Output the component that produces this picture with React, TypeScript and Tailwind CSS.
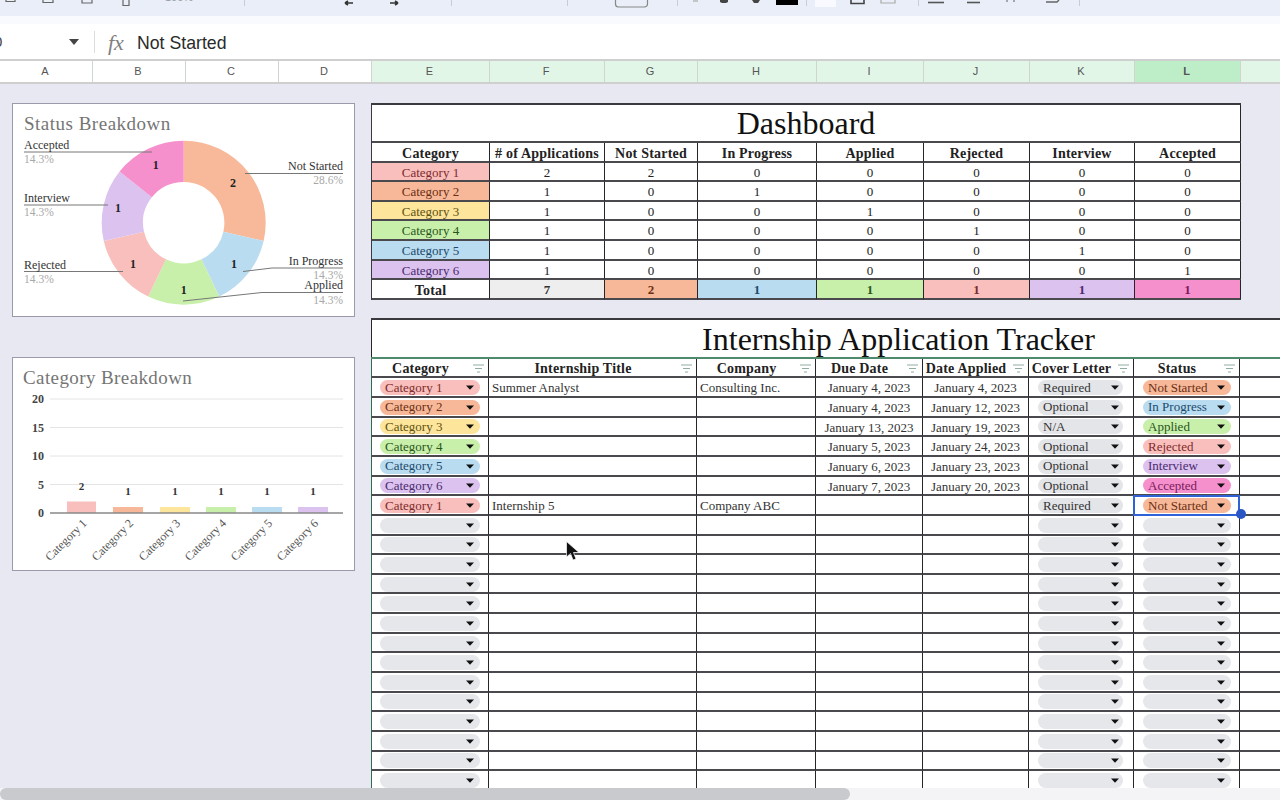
import React from 'react'

const serif = { fontFamily: '"Liberation Serif", serif' }

const COLS_DASH = 'grid-cols-[118px_115px_93px_119px_107px_106px_105px_106px]'

const CATS = [
  { bg: 'bg-[#f8bfbd]', text: 'text-[#7f2b2b]' },
  { bg: 'bg-[#f7b899]', text: 'text-[#6b2f12]' },
  { bg: 'bg-[#fde59b]', text: 'text-[#5f5210]' },
  { bg: 'bg-[#c9f0ab]', text: 'text-[#28561a]' },
  { bg: 'bg-[#b9dcf1]', text: 'text-[#1b4a6b]' },
  { bg: 'bg-[#dcc2ee]', text: 'text-[#4a2a70]' },
]

const STATUS: Record<string, { bg: string; text: string }> = {
  'Not Started': { bg: 'bg-[#f7b899]', text: 'text-[#6b2f12]' },
  'In Progress': { bg: 'bg-[#b9dcf1]', text: 'text-[#1b4a6b]' },
  Applied: { bg: 'bg-[#c9f0ab]', text: 'text-[#28561a]' },
  Rejected: { bg: 'bg-[#f8bfbd]', text: 'text-[#7f2b2b]' },
  Interview: { bg: 'bg-[#dcc2ee]', text: 'text-[#4a2a70]' },
  Accepted: { bg: 'bg-[#f590cc]', text: 'text-[#7a1b5c]' },
}

const COLUMNS = ['A', 'B', 'C', 'D', 'E', 'F', 'G', 'H', 'I', 'J', 'K', 'L', '']
const COLUMN_WIDTHS = [93, 93, 93, 93, 118, 115, 93, 119, 107, 106, 105, 106, 40]

const DASH_ROWS = [
  [2, 2, 0, 0, 0, 0, 0],
  [1, 0, 1, 0, 0, 0, 0],
  [1, 0, 0, 1, 0, 0, 0],
  [1, 0, 0, 0, 1, 0, 0],
  [1, 0, 0, 0, 0, 1, 0],
  [1, 0, 0, 0, 0, 0, 1],
]

const TRACKER = [
  { cat: 0, title: 'Summer Analyst', company: 'Consulting Inc.', due: 'January 4, 2023', applied: 'January 4, 2023', cover: 'Required', status: 'Not Started' },
  { cat: 1, title: '', company: '', due: 'January 4, 2023', applied: 'January 12, 2023', cover: 'Optional', status: 'In Progress' },
  { cat: 2, title: '', company: '', due: 'January 13, 2023', applied: 'January 19, 2023', cover: 'N/A', status: 'Applied' },
  { cat: 3, title: '', company: '', due: 'January 5, 2023', applied: 'January 24, 2023', cover: 'Optional', status: 'Rejected' },
  { cat: 4, title: '', company: '', due: 'January 6, 2023', applied: 'January 23, 2023', cover: 'Optional', status: 'Interview' },
  { cat: 5, title: '', company: '', due: 'January 7, 2023', applied: 'January 20, 2023', cover: 'Optional', status: 'Accepted' },
  { cat: 0, title: 'Internship 5', company: 'Company ABC', due: '', applied: '', cover: 'Required', status: 'Not Started' },
]

// horizontal rules read heavier than the vertical ones in the sheet
const cellBase = 'border-r border-r-[#26262a] border-b-2 border-b-[#4a4a4e] flex items-center justify-center min-w-0'
const cell = `${cellBase} pt-[2px]`
const pillCell = `${cellBase} pt-[1px]`
const rowEnd = 'border-b-2 border-b-[#4a4a4e]'

function Caret() {
  return (
    <svg width="8" height="5" viewBox="0 0 8 5" className="shrink-0">
      <path d="M0 0.5h8L4 4.8z" fill="#111" />
    </svg>
  )
}

function FilterIcon() {
  return (
    <svg width="11" height="9" viewBox="0 0 11 9" className="shrink-0 mr-[4px]">
      <path d="M0 1h11M2 4.5h7M4 8h3" stroke="#8fae9f" strokeWidth="1.2" />
    </svg>
  )
}

function Pill({ label, bg, text, arrowGap }: { label?: string; bg: string; text: string; arrowGap: string }) {
  return (
    <div className={`flex h-[15px] w-full items-center justify-between rounded-full pl-[5px] ${arrowGap} ${bg}`}>
      <span className={`-mt-[1px] text-[13px] leading-none whitespace-nowrap ${text}`}>{label}</span>
      <Caret />
    </div>
  )
}

function ToolbarStubs() {
  // only the bottom few pixels of the toolbar icons peek out above the fold
  return (
    <div className="h-[16px] shrink-0 bg-[#e9eef8]">
      <svg width="1280" height="16" viewBox="0 0 1280 16" className="block">
        <g fill="none" stroke="#666" strokeWidth="1.2">
          <path d="M6 0v1.5h9V0" />
          <path d="M43 0v2.5h10V0" />
          <path d="M82 0v3h10V0" />
          <path d="M123 0v5.5h6V0" />
          <path d="M345 3h8M345 3l3-2M345 3l3 2" stroke="#333" strokeWidth="1.6" />
          <path d="M398 3h-8M398 3l-3-2M398 3l-3 2" stroke="#333" strokeWidth="1.6" />
          <rect x="615.5" y="-6" width="32" height="13" rx="3" stroke="#888" />
          <path d="M693 1h5" stroke="#aaa" />
          <path d="M851 0v3.5h13V0" stroke="#444" strokeWidth="1.6" />
          <path d="M881 0v3h14V0" stroke="#aaa" />
          <path d="M928 2.5h16" stroke="#555" strokeWidth="1.6" />
          <path d="M967 2.5h13" stroke="#555" strokeWidth="1.6" />
          <path d="M1007 0v2M1014 0v2" stroke="#777" />
          <path d="M1046 2h11l2-2" stroke="#666" strokeWidth="1.4" />
        </g>
        <g fill="#c8ccd4">
          <rect x="244" y="0" width="1" height="6" />
          <rect x="451" y="0" width="1" height="6" />
          <rect x="567" y="0" width="1" height="6" />
          <rect x="677" y="0" width="1" height="6" />
          <rect x="806" y="0" width="1" height="6" />
          <rect x="918" y="0" width="1" height="6" />
          <rect x="1079" y="0" width="1" height="6" />
        </g>
        <path d="M720 0h8v2l-2 1h-4l-2-1z" fill="#444" />
        <path d="M752 0h8l-2 3h-4z" fill="#444" />
        <rect x="776" y="0" width="22" height="5" fill="#000" />
        <rect x="815" y="0" width="21" height="7" fill="#f8faff" />
        <text x="165" y="1" fontSize="11" fill="#9a9ea6" fontFamily="Liberation Sans">100%</text>
      </svg>
    </div>
  )
}

function FormulaBar() {
  return (
    <div className="h-[45px] shrink-0 bg-white flex flex-col">
      <div className="h-[11px] bg-[#f8fafd]" />
      <div className="flex-1 flex items-center border-b-2 border-[#cfcfcf] font-['Liberation_Sans']">
        <span className="w-[70px] text-[15px] -ml-[6px] mt-[2px] text-[#444]">0</span>
        <svg width="10" height="6" viewBox="0 0 10 6" className="ml-[5px]">
          <path d="M0 0h10L5 6z" fill="#444" />
        </svg>
        <div className="ml-[15px] w-px h-[22px] bg-[#dcdcdc]" />
        <span className="ml-[13px] mt-[2px] w-[29px] text-[22px] italic text-[#808080] font-['Liberation_Serif']">fx</span>
        <span className="mt-[4px] text-[17.7px] text-[#2a2a2a]">Not Started</span>
      </div>
    </div>
  )
}

function ColumnHeaders() {
  return (
    <div className="h-[23px] shrink-0 flex border-b-2 border-[#cfcfcf] bg-white font-['Liberation_Sans']">
      {COLUMNS.map((c, i) => (
        <div
          key={i}
          style={{ width: COLUMN_WIDTHS[i] }}
          className={`shrink-0 flex items-center justify-center pr-[2px] text-[11px] text-[#555] border-r border-[#cfd6d0] ${
            c === 'L' ? 'bg-[#bdeec8] text-[#1f4d2b] font-bold' : i >= 4 ? 'bg-[#e2f6e8]' : 'bg-white'
          }`}
        >
          {c}
        </div>
      ))}
    </div>
  )
}

const SLICES = [
  { color: '#f8b99b', value: 2 },
  { color: '#b9dcf1', value: 1 },
  { color: '#c9f0ab', value: 1 },
  { color: '#f8bfbd', value: 1 },
  { color: '#dcc2ee', value: 1 },
  { color: '#f590cc', value: 1 },
]

function donutPath(start: number, end: number, cx: number, cy: number, r: number, ri: number) {
  const p = (a: number, rad: number) => `${cx + rad * Math.sin(a)} ${cy - rad * Math.cos(a)}`
  const large = end - start > Math.PI ? 1 : 0
  return `M${p(start, r)}A${r} ${r} 0 ${large} 1 ${p(end, r)}L${p(end, ri)}A${ri} ${ri} 0 ${large} 0 ${p(start, ri)}Z`
}

function StatusChart() {
  let acc = 0
  const labels = [
    { t: 'Accepted', p: '14.3%', x: 24, y: 149, py: 163, anchor: 'start', line: 'M24 152H152' },
    { t: 'Interview', p: '14.3%', x: 24, y: 202, py: 216, anchor: 'start', line: 'M24 205H108' },
    { t: 'Rejected', p: '14.3%', x: 24, y: 269, py: 283, anchor: 'start', line: 'M24 271.5H123' },
    { t: 'Not Started', p: '28.6%', x: 343, y: 170, py: 184, anchor: 'end', line: 'M343 173.5H245' },
    { t: 'In Progress', p: '14.3%', x: 343, y: 265, py: 279, anchor: 'end', line: 'M343 268H272L243 271.5' },
    { t: 'Applied', p: '14.3%', x: 343, y: 289, py: 304, anchor: 'end', line: 'M343 292.5H262L183 301' },
  ]
  const nums = [
    ['2', 233, 187],
    ['1', 234, 268],
    ['1', 183.7, 294],
    ['1', 133, 268],
    ['1', 118, 212],
    ['1', 155.7, 169],
  ] as const
  return (
    <svg width="341" height="212" viewBox="13 104 341 212" className="block" style={serif}>
      <text x="24" y="130" fontSize="19" letterSpacing="0.5" fill="#757575">Status Breakdown</text>
      {SLICES.map((s) => {
        const start = (acc / 7) * Math.PI * 2
        acc += s.value
        const end = (acc / 7) * Math.PI * 2
        return <path key={s.color} d={donutPath(start, end, 183.7, 222.7, 82, 40.7)} fill={s.color} />
      })}
      {labels.map((l) => (
        <g key={l.t}>
          <path d={l.line} stroke="#777" strokeWidth="1" fill="none" />
          <text x={l.x} y={l.y} fontSize="12" fill="#333" textAnchor={l.anchor as 'start' | 'end'}>{l.t}</text>
          <text x={l.x} y={l.py} fontSize="11.5" fill="#a8a8a8" textAnchor={l.anchor as 'start' | 'end'}>{l.p}</text>
        </g>
      ))}
      {nums.map(([t, x, y]) => (
        <text key={`${x}`} x={x} y={y} fontSize="12" fontWeight="bold" fill="#222" textAnchor="middle">{t}</text>
      ))}
    </svg>
  )
}

function CategoryChart() {
  const bars = [
    { x: 67, w: 29, h: 11.5, c: '#f8bfbd', n: '2' },
    { x: 113, w: 30, h: 6, c: '#f7b899', n: '1' },
    { x: 160, w: 30, h: 6, c: '#fde59b', n: '1' },
    { x: 206, w: 30, h: 6, c: '#c9f0ab', n: '1' },
    { x: 252, w: 30, h: 6, c: '#b9dcf1', n: '1' },
    { x: 298, w: 30, h: 6, c: '#dcc2ee', n: '1' },
  ]
  const ticks = [
    { t: '20', y: 399 },
    { t: '15', y: 427.5 },
    { t: '10', y: 456 },
    { t: '5', y: 484.5 },
  ]
  return (
    <svg width="341" height="212" viewBox="13 358 341 212" className="block" style={serif}>
      <text x="23" y="384" fontSize="19" letterSpacing="0.4" fill="#757575">Category Breakdown</text>
      {ticks.map((t) => (
        <g key={t.t}>
          <path d={`M50 ${t.y}H343`} stroke="#e4e4e4" strokeWidth="1" />
          <text x="44" y={t.y + 4} fontSize="12" fontWeight="bold" fill="#444" textAnchor="end">{t.t}</text>
        </g>
      ))}
      <text x="44" y="517" fontSize="12" fontWeight="bold" fill="#444" textAnchor="end">0</text>
      {bars.map((b, i) => (
        <g key={i}>
          <rect x={b.x} y={513 - b.h} width={b.w} height={b.h} fill={b.c} />
          <text x={b.x + b.w / 2} y={513 - b.h - 12} fontSize="11" fontWeight="bold" fill="#333" textAnchor="middle">{b.n}</text>
          <text
            x={0}
            y={0}
            transform={`translate(${b.x + b.w / 2 + 6} 524) rotate(-45)`}
            fontSize="12"
            fill="#555"
            textAnchor="end"
          >
            {`Category ${i + 1}`}
          </text>
        </g>
      ))}
      <path d="M50 513H343" stroke="#888" strokeWidth="1.6" />
    </svg>
  )
}

function Dashboard() {
  const heads = ['Category', '# of Applications', 'Not Started', 'In Progress', 'Applied', 'Rejected', 'Interview', 'Accepted']
  const totals = [
    { v: 7, bg: 'bg-[#eeeeee]', text: 'text-[#333]' },
    { v: 2, bg: 'bg-[#f7b899]', text: 'text-[#6b2f12]' },
    { v: 1, bg: 'bg-[#b9dcf1]', text: 'text-[#1b4a6b]' },
    { v: 1, bg: 'bg-[#c9f0ab]', text: 'text-[#28561a]' },
    { v: 1, bg: 'bg-[#f8bfbd]', text: 'text-[#7f2b2b]' },
    { v: 1, bg: 'bg-[#dcc2ee]', text: 'text-[#4a2a70]' },
    { v: 1, bg: 'bg-[#f590cc]', text: 'text-[#7a1b5c]' },
  ]
  return (
    <div className="w-[870px] bg-white border-t-2 border-l border-[#3a3a3e] text-[#222]">
      <div className="h-[38px] flex items-center justify-center border-b-2 border-b-[#4a4a4e] border-r border-r-[#26262a] text-[32px] text-[#111]">
        Dashboard
      </div>
      <div className={`grid ${COLS_DASH} auto-rows-[19.6px] text-[13px]`}>
        {heads.map((h) => (
          <div key={h} className={`${cellBase} pt-[3px] font-bold text-[14px] tracking-[0.2px] whitespace-nowrap`}>{h}</div>
        ))}
        {DASH_ROWS.map((row, i) => (
          <React.Fragment key={i}>
            <div className={`${cell} ${CATS[i].bg} ${CATS[i].text}`}>Category {i + 1}</div>
            {row.map((v, j) => (
              <div key={j} className={cell}>{v}</div>
            ))}
          </React.Fragment>
        ))}
        <div className={`${cellBase} pt-[3px] font-bold text-[14px] tracking-[0.2px]`}>Total</div>
        {totals.map((t, i) => (
          <div key={i} className={`${cell} ${t.bg} ${t.text} font-bold`}>{t.v}</div>
        ))}
      </div>
    </div>
  )
}

function Tracker() {
  const heads = ['Category', 'Internship Title', 'Company', 'Due Date', 'Date Applied', 'Cover Letter', 'Status']
  const gridCols = 'grid-cols-[118px_208px_119px_107px_106px_105px_106px_1fr]'
  const blank = Array.from({ length: 14 })
  return (
    <div className="mt-[18px] w-[909px] bg-white border-t-2 border-[#3a3a3e] text-[#222] overflow-hidden">
      <div className="h-[37px] pt-[1px] w-[1054px] flex items-center justify-center border-l border-[#26262a] text-[32px] text-[#111] whitespace-nowrap">
        Internship Application Tracker
      </div>
      <div className={`grid ${gridCols} auto-rows-[19.65px] text-[13px] border-t-2 border-[#4f8a6c]`}>
        {heads.map((h) => (
          <div key={h} className={`${cell} font-bold text-[14px] tracking-[0.2px] whitespace-nowrap first:border-l first:border-l-[#2f6b4d]`}>
            <span className="flex-1 pr-[4px] text-center">{h}</span>
            <FilterIcon />
          </div>
        ))}
        <div className={rowEnd} />
        {TRACKER.map((r, i) => (
          <React.Fragment key={i}>
            <div className={`${pillCell} border-l border-l-[#2f6b4d] pl-[8px] pr-[8px]`}>
              <Pill label={`Category ${r.cat + 1}`} bg={CATS[r.cat].bg} text={CATS[r.cat].text} arrowGap="pr-[6px]" />
            </div>
            <div className={`${cell} justify-start pl-[3px] text-[#333]`}>{r.title}</div>
            <div className={`${cell} justify-start pl-[3px] text-[#333]`}>{r.company}</div>
            <div className={`${cell} text-[#333] whitespace-nowrap`}>{r.due}</div>
            <div className={`${cell} text-[#333] whitespace-nowrap`}>{r.applied}</div>
            <div className={`${pillCell} pl-[9px] pr-[10px]`}>
              <Pill label={r.cover} bg="bg-[#e4e5e8]" text="text-[#333]" arrowGap="pr-[4px]" />
            </div>
            <div className={`${pillCell} relative pl-[9px] pr-[8px]`}>
              <Pill label={r.status} bg={STATUS[r.status].bg} text={STATUS[r.status].text} arrowGap="pr-[6px]" />
              {i === 6 && (
                <div className="absolute -left-px -top-px -right-px -bottom-[2px] border-2 border-[#2f62d6]" />
              )}
            </div>
            <div className={rowEnd} />
          </React.Fragment>
        ))}
        {blank.map((_, i) => (
          <React.Fragment key={i}>
            <div className={`${pillCell} border-l border-l-[#2f6b4d] pl-[8px] pr-[8px]`}>
              <Pill bg="bg-[#e6e7ea]" text="text-[#333]" arrowGap="pr-[6px]" />
            </div>
            <div className={cell} />
            <div className={cell} />
            <div className={cell} />
            <div className={cell} />
            <div className={`${pillCell} pl-[9px] pr-[10px]`}>
              <Pill bg="bg-[#e6e7ea]" text="text-[#333]" arrowGap="pr-[4px]" />
            </div>
            <div className={`${pillCell} pl-[9px] pr-[8px]`}>
              <Pill bg="bg-[#e6e7ea]" text="text-[#333]" arrowGap="pr-[6px]" />
            </div>
            <div className={rowEnd} />
          </React.Fragment>
        ))}
      </div>
    </div>
  )
}

export default function App() {
  return (
    <div className="relative w-[1280px] h-[800px] overflow-hidden flex flex-col bg-[#e8e8f2]">
      <ToolbarStubs />
      <FormulaBar />
      <ColumnHeaders />

      <div className="flex-1 min-h-0 flex overflow-hidden pt-[19px]" style={serif}>
        <div className="w-[371px] shrink-0 pl-[12px] flex flex-col gap-[40px]">
          <div className="w-[343px] h-[214px] bg-white border border-[#9a9aac]">
            <StatusChart />
          </div>
          <div className="w-[343px] h-[214px] bg-white border border-[#9a9aac]">
            <CategoryChart />
          </div>
        </div>
        <div className="flex-1 min-w-0">
          <Dashboard />
          <Tracker />
        </div>
      </div>

      <div className="h-[12px] shrink-0 bg-[#f4f4f7]">
        <div className="h-full w-[850px] rounded-full bg-[#c9cacd]" />
      </div>

      {/* selection handle */}
      <div className="absolute left-[1236px] top-[509px] w-[10px] h-[10px] rounded-full bg-[#2a55c4]" />
      {/* mouse pointer */}
      <svg width="14" height="20" viewBox="0 0 14 20" className="absolute left-[566px] top-[541px]">
        <path d="M0.5 0.5V16L4.5 12.5L7 19L10 18L7.5 11.5H13Z" fill="#111" stroke="#fff" strokeWidth="0.7" />
      </svg>
    </div>
  )
}
